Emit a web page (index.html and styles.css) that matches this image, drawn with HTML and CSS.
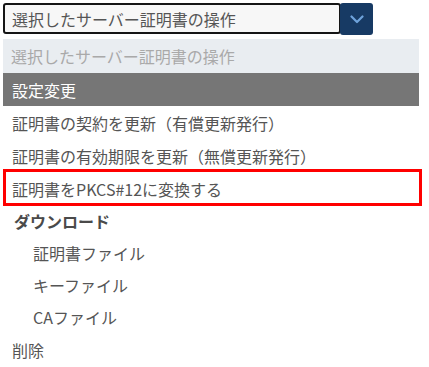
FILE: index.html
```html
<!DOCTYPE html>
<html lang="ja">
<head>
<meta charset="utf-8">
<link rel="stylesheet" href="styles.css">
</head>
<body>
<div class="page">
  <div class="select-row">
    <div class="select">選択したサーバー証明書の操作</div>
    <div class="select-btn">
      <svg width="14" height="9" viewBox="0 0 14 9"><path d="M1.5 1.5 L7 7 L12.5 1.5" fill="none" stroke="#6fa3dc" stroke-width="2.2" stroke-linecap="round" stroke-linejoin="round"/></svg>
    </div>
  </div>
  <ul class="list">
    <li class="opt disabled">選択したサーバー証明書の操作</li>
    <li class="opt header">設定変更</li>
    <li class="opt">証明書の契約を更新（有償更新発行）</li>
    <li class="opt">証明書の有効期限を更新（無償更新発行）</li>
    <li class="opt marked">証明書をPKCS#12に変換する<span class="mark"></span></li>
    <li class="opt group">ダウンロード</li>
    <li class="opt sub">証明書ファイル</li>
    <li class="opt sub">キーファイル</li>
    <li class="opt sub">CAファイル</li>
    <li class="opt">削除</li>
  </ul>
</div>
</body>
</html>
```

FILE: styles.css
```css
html, body {
  margin: 0;
  padding: 0;
  background: #ffffff;
}
body {
  font-family: "Noto Sans CJK JP", "Noto Sans", sans-serif;
  font-size: 16px;
  color: #555555;
}
.page {
  padding: 3px 0 0 3px;
}
.select-row {
  display: flex;
  align-items: flex-start;
}
.select {
  box-sizing: border-box;
  width: 338px;
  height: 31px;
  border: 2px solid #151515;
  border-radius: 3px;
  background: #f7f7f7;
  color: #555555;
  padding-left: 7px;
  display: flex;
  align-items: center;
  line-height: 1;
}
.select-btn {
  box-sizing: border-box;
  width: 33px;
  height: 32px;
  margin-left: -1px;
  background: #173a64;
  border-radius: 3px;
  display: flex;
  align-items: center;
  justify-content: center;
}
.list {
  list-style: none;
  margin: 4px 0 0 0;
  padding: 0;
  width: 416px;
}
.opt {
  position: relative;
  height: 33px;
  display: flex;
  align-items: center;
  padding-left: 9px;
  line-height: 1;
}
.disabled {
  height: 34px;
  background: #e9edf1;
  color: #a9a9a9;
  padding-left: 8px;
}
.header {
  background: #767676;
  color: #ffffff;
}
.group {
  height: 32px;
  font-weight: bold;
  color: #4a4a4a;
  padding-left: 11px;
}
.sub {
  height: 32px;
  padding-left: 30px;
}
.mark {
  position: absolute;
  left: 0;
  right: -3px;
  top: -3px;
  bottom: -1px;
  border: 3px solid #ff0000;
  pointer-events: none;
}
```
